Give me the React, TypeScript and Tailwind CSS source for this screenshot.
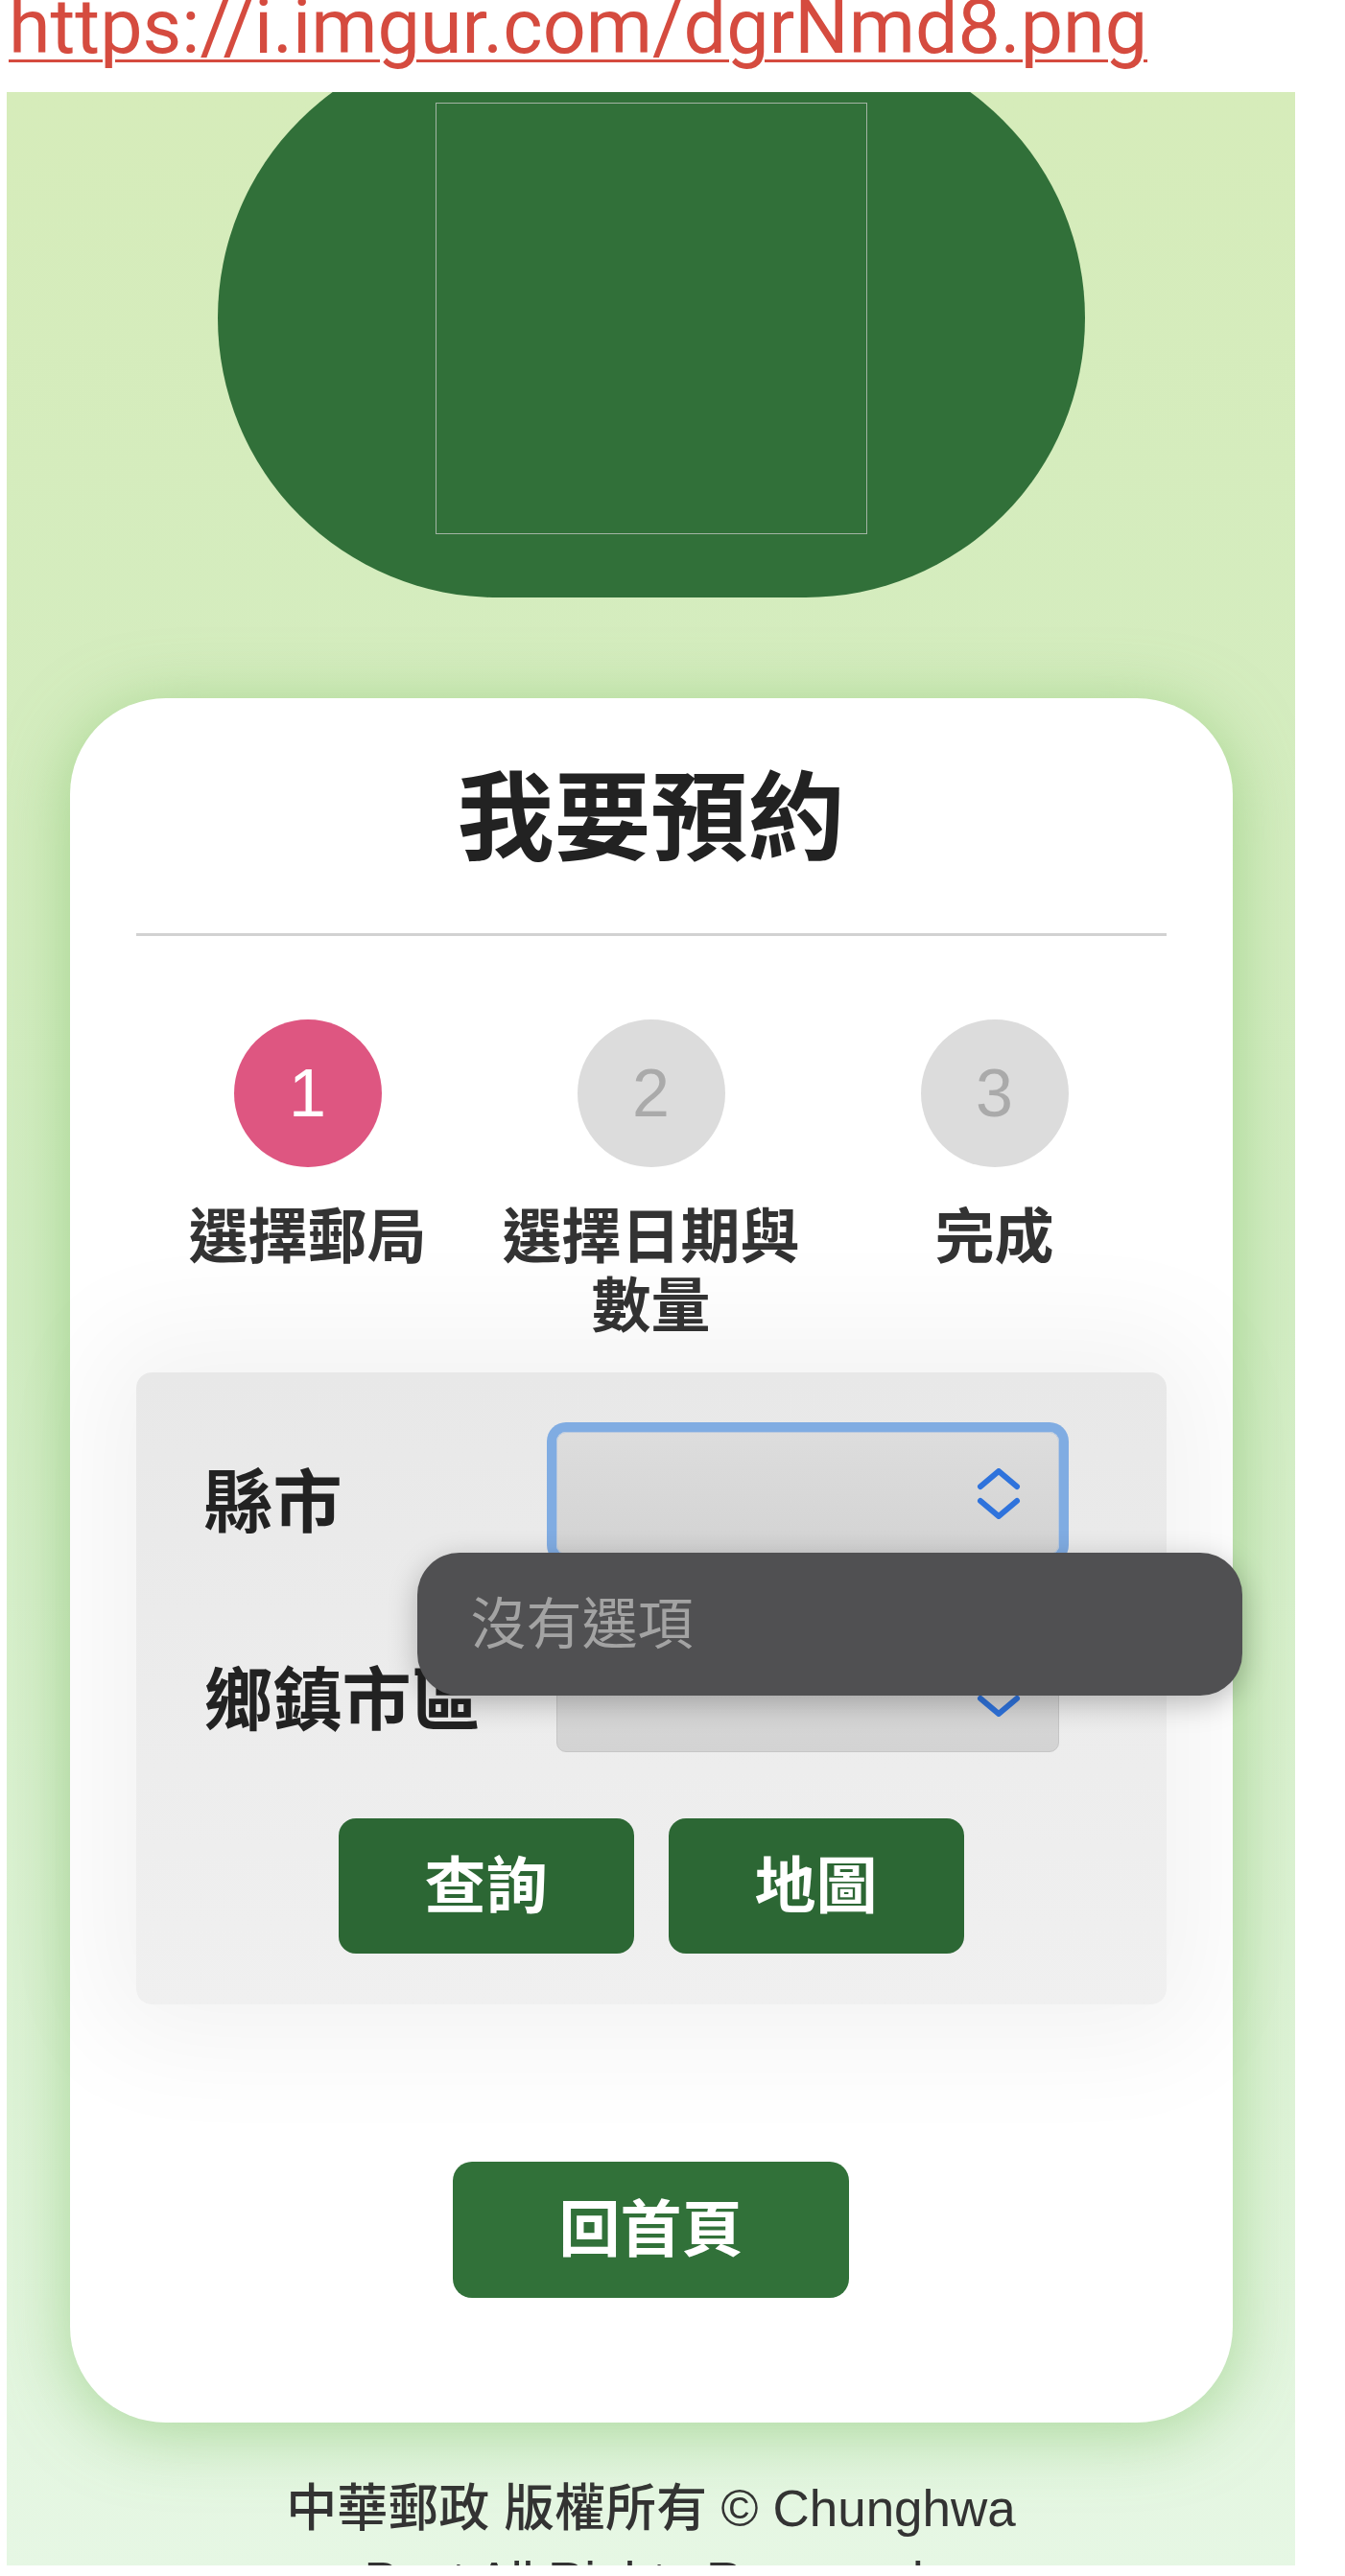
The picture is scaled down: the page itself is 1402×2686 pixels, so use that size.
// App.tsx — 我要預約 (step 1 of booking), mobile screenshot
function UpDownChevron() {
  return (
    <svg
      viewBox="0 0 46 53"
      width="46"
      height="53"
      fill="none"
      stroke="#2f73dc"
      strokeWidth="6"
      strokeLinecap="round"
      strokeLinejoin="round"
      aria-hidden="true"
    >
      <path d="M4 19 L23 3 L42 19" />
      <path d="M4 34 L23 50 L42 34" />
    </svg>
  )
}

type Step = { n: number; label: string; active?: boolean }

const steps: Step[] = [
  { n: 1, label: '選擇郵局', active: true },
  { n: 2, label: '選擇日期與數量' },
  { n: 3, label: '完成' },
]

function Select({ focused }: { focused?: boolean }) {
  return (
    <div
      className={`flex h-[128px] w-[524px] items-center justify-end rounded-[10px] border bg-linear-to-b from-[#dddddd] to-[#d3d3d3] pr-[39px]
        ${focused ? 'border-[#b9c9de] shadow-[0_0_0_10px_#80ace2]' : 'border-[#c6c6c6]'}`}
    >
      <UpDownChevron />
    </div>
  )
}

export default function App() {
  return (
    <div className="h-[2686px] w-[1402px] overflow-hidden bg-white font-['Liberation_Sans','Noto_Sans_CJK_TC',sans-serif]">
      {/* link on top of the screenshot */}
      <div className="h-[96px] overflow-hidden pl-[9px]">
        <a
          href="#"
          className="-mt-[11px] block font-['Roboto',sans-serif] text-[79px] leading-[79px] text-[#d54b3f] underline decoration-[3px] underline-offset-[7px]"
        >
          https://i.imgur.com/dgrNmd8.png
        </a>
      </div>

      {/* phone screen */}
      <div className="ml-[7px] h-[2579px] w-[1343px] overflow-hidden bg-linear-to-b from-[#d6ecba] via-[#d3edc4] to-[#e6f7e4]">
        {/* logo capsule */}
        <div className="mx-auto -mt-[56px] flex h-[583px] w-[904px] items-center justify-center rounded-full bg-[#317039]">
          <div className="h-[450px] w-[450px] border border-[#a3b4a4]" />
        </div>

        {/* card */}
        <div className="relative mx-auto mt-[105px] h-[1798px] w-[1212px] rounded-[100px] bg-white px-[69px] pt-[66px] shadow-[0_10px_70px_rgba(120,190,95,0.55)]">
          <h1 className="text-center text-[101px] font-bold leading-[120px] text-[#222]">我要預約</h1>
          <div className="mt-[59px] h-[3px] bg-[#d2d2d2]" />

          {/* steps */}
          <div className="mt-[87px] grid grid-cols-3">
            {steps.map((s) => (
              <div key={s.n} className="flex flex-col items-center">
                <div
                  className={`flex h-[154px] w-[154px] items-center justify-center rounded-full text-[70px]
                    ${s.active ? 'bg-[#de5681] text-white' : 'bg-[#dcdcdc] text-[#aaaaaa]'}`}
                >
                  {s.n}
                </div>
                <div className="mt-[38px] text-center text-[62px] font-bold leading-[72px] text-[#333]">
                  {s.label}
                </div>
              </div>
            ))}
          </div>

          {/* search panel */}
          <div className="relative mt-[32px] rounded-[16px] bg-linear-to-b from-[#e8e8e8] to-[#f0f0f0] pb-[53px] pt-[62px] shadow-[0_0_120px_40px_rgba(0,0,0,0.05)]">
            <div className="flex items-center pl-[71px]">
              <div className="w-[367px] pt-[20px] text-[72px] font-bold leading-none text-[#222]">縣市</div>
              <Select focused />
            </div>
            <div className="mt-[78px] flex items-center pl-[71px]">
              <div className="w-[367px] pt-[20px] text-[72px] font-bold leading-none text-[#222]">鄉鎮市區</div>
              <Select />
            </div>
            <div className="mt-[69px] flex justify-center gap-[36px]">
              <button className="h-[141px] w-[308px] rounded-[18px] bg-[#2c6734] text-[64px] font-bold text-white">
                查詢
              </button>
              <button className="h-[141px] w-[308px] rounded-[18px] bg-[#2c6734] text-[64px] font-bold text-white">
                地圖
              </button>
            </div>

            {/* native picker popup */}
            <div className="absolute left-[293px] top-[188px] flex h-[149px] w-[860px] items-center rounded-[44px] bg-[#505052] pl-[56px] text-[58px] text-[#a3a3a3] shadow-[0_8px_30px_rgba(0,0,0,0.25)]">
              沒有選項
            </div>
          </div>

          <button className="mx-auto mt-[164px] flex h-[142px] w-[413px] items-center justify-center rounded-[20px] bg-[#317139] text-[64px] font-bold text-white">
            回首頁
          </button>
        </div>

        <p className="mx-auto mt-[52px] w-[860px] text-center text-[53px] font-medium leading-[75px] text-[#333]">
          中華郵政 版權所有 © Chunghwa Post All Rights Reserved.
        </p>
      </div>
    </div>
  )
}
